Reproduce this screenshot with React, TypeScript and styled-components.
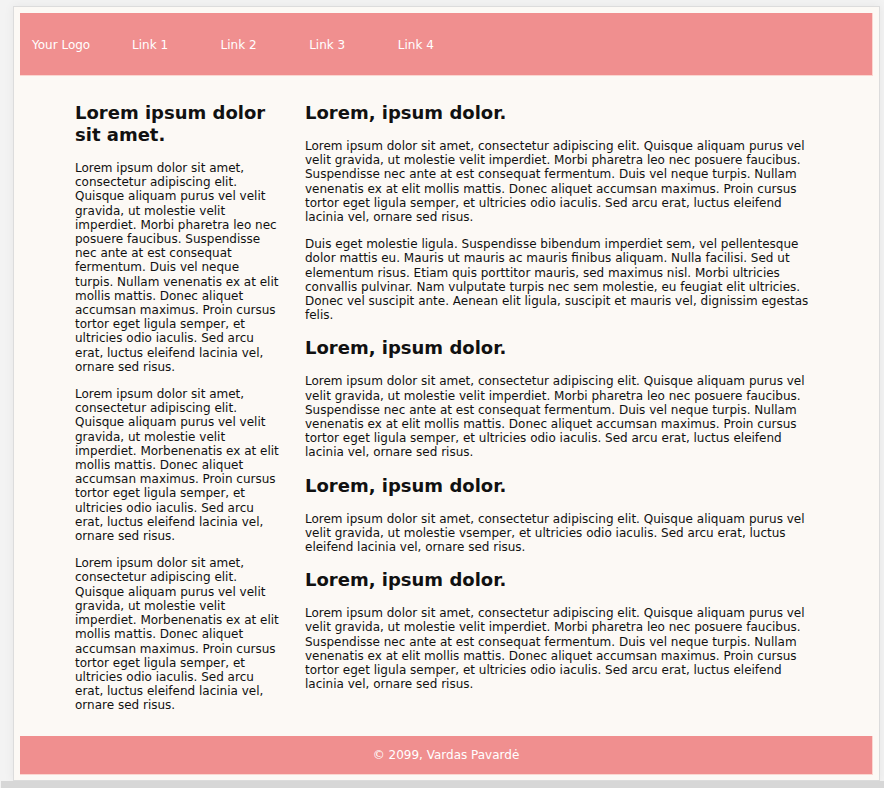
import React from "react";
import styled, { createGlobalStyle } from "styled-components";

const GlobalStyle = createGlobalStyle`
  html, body {
    margin: 0;
    padding: 0;
    background: #f3f3f3;
  }
  body {
    font-family: "DejaVu Sans", Verdana, sans-serif;
    font-size: 12px;
    color: #111;
  }
`;

const Page = styled.div`
  margin: 6px 4px 0 13px;
  padding: 6px 6px 5px;
  background: #fcf9f5;
  border: 1px solid #dcdcdc;
  box-shadow: 0 0 10px rgba(0, 0, 0, 0.06);
`;

const Base = styled.div`
  margin-left: 1px;
  height: 20px;
  background: #d7d7d7;
`;

const Header = styled.header`
  display: flex;
  align-items: center;
  height: 63px;
  padding-top: 2px;
  box-sizing: border-box;
  background: #f08f8f;
  border-right: 1px solid #fbd6d0;
  border-bottom: 1px solid #fbd6d0;
`;

const NavItem = styled.a<{ $first?: boolean }>`
  color: #fff;
  text-decoration: none;
  font-size: 12px;
  margin-left: ${(p) => (p.$first ? "12px" : "0")};
  width: ${(p) => (p.$first ? "100px" : "88.6px")};
`;

const Main = styled.main`
  display: grid;
  grid-template-columns: 205px 510px;
  column-gap: 25px;
  padding: 11px 0 10px 55px;
`;

const Column = styled.section``;

const Heading = styled.h2`
  font-size: 18px;
  font-weight: bold;
  line-height: 22px;
  margin: 15px 0;
`;

const Para = styled.p`
  margin: 13px 0;
  line-height: 14.2px;
`;

const Footer = styled.footer`
  display: flex;
  align-items: center;
  justify-content: center;
  height: 39px;
  box-sizing: border-box;
  background: #f08f8f;
  color: #fff;
  border-right: 1px solid #fbd6d0;
  border-bottom: 1px solid #fbd6d0;
`;

const full =
  "Lorem ipsum dolor sit amet, consectetur adipiscing elit. Quisque aliquam purus vel velit gravida, ut molestie velit imperdiet. Morbi pharetra leo nec posuere faucibus. Suspendisse nec ante at est consequat fermentum. Duis vel neque turpis. Nullam venenatis ex at elit mollis mattis. Donec aliquet accumsan maximus. Proin cursus tortor eget ligula semper, et ultricies odio iaculis. Sed arcu erat, luctus eleifend lacinia vel, ornare sed risus.";

const shortLeft =
  "Lorem ipsum dolor sit amet, consectetur adipiscing elit. Quisque aliquam purus vel velit gravida, ut molestie velit imperdiet. Morbenenatis ex at elit mollis mattis. Donec aliquet accumsan maximus. Proin cursus tortor eget ligula semper, et ultricies odio iaculis. Sed arcu erat, luctus eleifend lacinia vel, ornare sed risus.";

const duis =
  "Duis eget molestie ligula. Suspendisse bibendum imperdiet sem, vel pellentesque dolor mattis eu. Mauris ut mauris ac mauris finibus aliquam. Nulla facilisi. Sed ut elementum risus. Etiam quis porttitor mauris, sed maximus nisl. Morbi ultricies convallis pulvinar. Nam vulputate turpis nec sem molestie, eu feugiat elit ultricies. Donec vel suscipit ante. Aenean elit ligula, suscipit et mauris vel, dignissim egestas felis.";

const brief =
  "Lorem ipsum dolor sit amet, consectetur adipiscing elit. Quisque aliquam purus vel velit gravida, ut molestie vsemper, et ultricies odio iaculis. Sed arcu erat, luctus eleifend lacinia vel, ornare sed risus.";

const sections = [
  { title: "Lorem, ipsum dolor.", paras: [full, duis] },
  { title: "Lorem, ipsum dolor.", paras: [full] },
  { title: "Lorem, ipsum dolor.", paras: [brief] },
  { title: "Lorem, ipsum dolor.", paras: [full] },
];

export default function App() {
  return (
    <>
      <GlobalStyle />
      <Page>
        <Header>
          <NavItem $first href="#">Your Logo</NavItem>
          <NavItem href="#">Link 1</NavItem>
          <NavItem href="#">Link 2</NavItem>
          <NavItem href="#">Link 3</NavItem>
          <NavItem href="#">Link 4</NavItem>
        </Header>
        <Main>
          <Column>
            <Heading>Lorem ipsum dolor sit amet.</Heading>
            <Para>{full}</Para>
            <Para>{shortLeft}</Para>
            <Para>{shortLeft}</Para>
          </Column>
          <Column>
            {sections.map((s, i) => (
              <React.Fragment key={i}>
                <Heading>{s.title}</Heading>
                {s.paras.map((p, j) => (
                  <Para key={j}>{p}</Para>
                ))}
              </React.Fragment>
            ))}
          </Column>
        </Main>
        <Footer>© 2099, Vardas Pavardė</Footer>
      </Page>
      <Base />
    </>
  );
}
